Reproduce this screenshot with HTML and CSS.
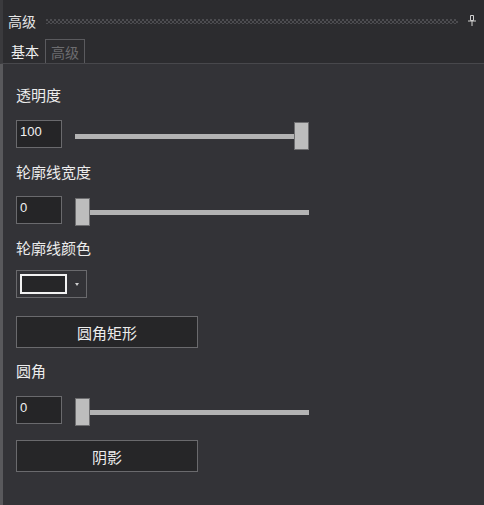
FILE: index.html
```html
<!DOCTYPE html>
<html lang="zh">
<head>
<meta charset="UTF-8" />
<meta name="viewport" content="width=device-width, initial-scale=1.0"/>
<title>高级</title>
<link rel="stylesheet" href="styles.css">
</head>
<body>

<div class="panel">
  <div class="head">
    <div class="titlebar">
      <span class="title">高级</span>
      <span class="grip"></span>
      <svg class="pin" width="8" height="11" viewBox="0 0 8 11">
        <path d="M2.5 0.5h3v5h-3z" fill="none" stroke="#cfcfcf" stroke-width="1"/>
        <path d="M0 6h8" stroke="#cfcfcf" stroke-width="1"/>
        <path d="M4 6v5" stroke="#cfcfcf" stroke-width="1"/>
      </svg>
    </div>
    <div class="tabs">
      <span class="tab">基本</span>
      <span class="tab off">高级</span>
    </div>
  </div>

  <div class="content">
    <div class="label first">透明度</div>
    <div class="row gap13">
      <div class="num">100</div>
      <div class="slider"><div class="track"></div><div class="thumb max"></div></div>
    </div>

    <div class="label">轮廓线宽度</div>
    <div class="row">
      <div class="num">0</div>
      <div class="slider"><div class="track"></div><div class="thumb"></div></div>
    </div>

    <div class="label">轮廓线颜色</div>
    <div class="picker">
      <span class="swatch"></span>
      <span class="arrow"></span>
    </div>

    <div class="btn first-btn">圆角矩形</div>

    <div class="label after-btn">圆角</div>
    <div class="row gap13">
      <div class="num">0</div>
      <div class="slider"><div class="track"></div><div class="thumb"></div></div>
    </div>

    <div class="btn last-btn">阴影</div>
  </div>
</div>

</body>
</html>
```

FILE: styles.css
```css
* { margin:0; padding:0; box-sizing:border-box; }
html, body { width:484px; height:505px; overflow:hidden; }
body {
  background:#333337;
  color:#ececec;
  font-family:"Noto Sans CJK SC", "Noto Sans", sans-serif;
}
.panel { display:flex; flex-direction:column; height:100%; }

/* header + tabs */
.head {
  background:#2c2c2f;
  border-left:3px solid #3a3a3d;
  border-bottom:1px solid #48484c;
}
.titlebar {
  height:38px; padding:4px 8px 0 5px;
  display:flex; align-items:center;
}
.title { font-size:14px; line-height:20px; color:#e6e6e6; }
.grip {
  flex:1; height:5px; margin:0 10px 0 10px;
  background-image:
    radial-gradient(circle at 1px 1px, #4c4c50 0.8px, transparent 1px),
    radial-gradient(circle at 1px 1px, #4c4c50 0.8px, transparent 1px);
  background-size:4px 4px, 4px 4px;
  background-position:0 0, 2px 2px;
}
.pin { display:block; margin-top:-2px; }
.tabs { height:25px; display:flex; padding-left:2px; }
.tab {
  padding:0 6px; font-size:14px; line-height:24px; color:#f0f0f0;
  margin-top:1px;
}
.tab.off {
  color:#6c6c6f; padding:0 5px;
  border:1px solid #5a5a5e; border-bottom:none;
}

/* content */
.content {
  flex:1;
  border-left:3px solid #59595c;
  padding:19px 0 0 13px;
}
.label { height:24px; line-height:24px; font-size:15px; color:#ececec; margin-top:12px; }
.label.first { margin-top:0; }
.label.after-btn { margin-top:11px; }
.row { display:flex; gap:13px; height:28px; margin-top:12px; }
.row.gap13 { margin-top:13px; }
.num {
  width:46px; height:28px;
  border:1px solid #6a6a6d; background:#252527;
  font-family:"Liberation Sans", sans-serif; font-size:13px;
  line-height:22px; padding-left:3px; color:#f2f2f2;
}
.slider {
  position:relative; width:234px; height:28px; margin-top:2px;
  display:flex; align-items:center;
}
.track { width:100%; height:5px; background:#b3b3b3; }
.thumb {
  position:absolute; top:0; left:0;
  width:15px; height:28px;
  background:#bdbdbd; border:1px solid #6e6e70;
}
.thumb.max { left:auto; right:0; }

.picker {
  width:71px; height:28px; margin-top:10px;
  border:1px solid #6a6a6d;
  display:flex; align-items:center; padding-left:3px;
}
.swatch { width:47px; height:20px; border:2px solid #f2f2f2; background:#262628; }
.arrow {
  margin-left:8px; margin-top:1px;
  border-left:2.5px solid transparent; border-right:2.5px solid transparent;
  border-top:3px solid #cfcfcf;
}
.btn {
  width:182px; height:32px;
  border:1px solid #6a6a6d; background:#262628;
  display:flex; align-items:center; justify-content:center;
  font-size:15px; color:#ececec;
}
.first-btn { margin-top:18px; }
.last-btn { margin-top:16px; }
```
